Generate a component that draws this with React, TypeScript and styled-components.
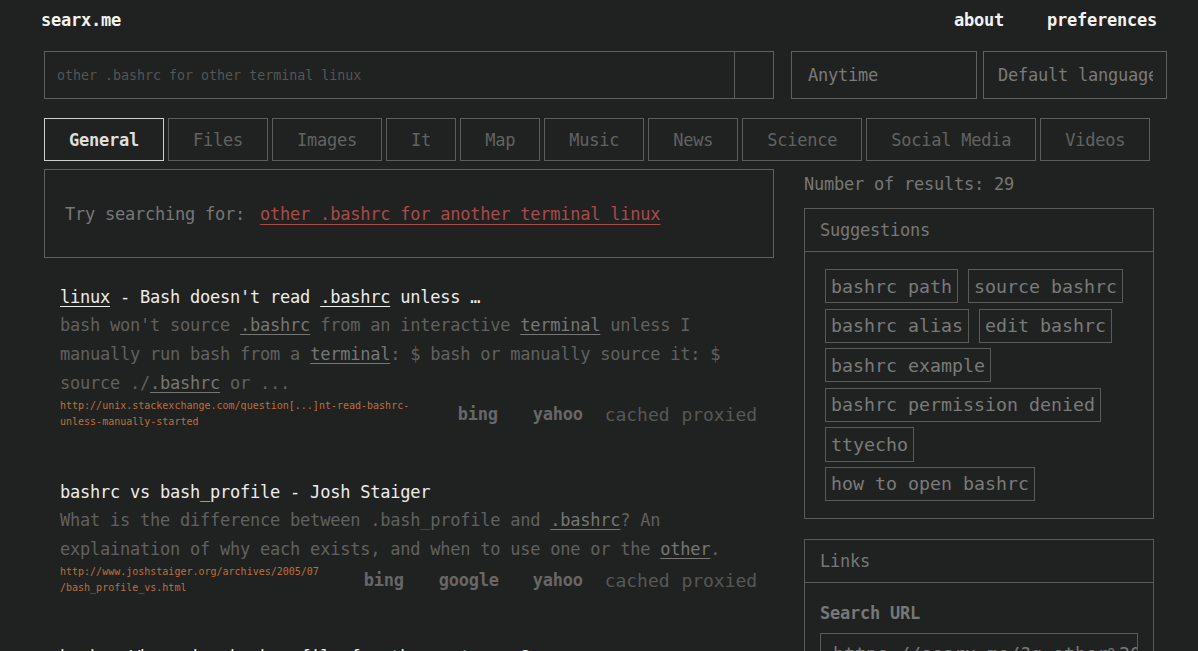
import React from "react";
import styled, { createGlobalStyle } from "styled-components";

const GlobalStyle = createGlobalStyle`
  html, body { margin: 0; padding: 0; }
  body {
    background: #202221;
    font-family: "DejaVu Sans Mono", "Liberation Mono", monospace;
    color: #777;
  }
  * { box-sizing: border-box; }
`;

const mono10 = `
  font-size: 17px;
  letter-spacing: -0.23px;
`;

const Page = styled.div`
  width: 1198px;
  min-height: 651px;
  overflow: hidden;
`;

const Header = styled.header`
  height: 40px;
  display: flex;
  align-items: center;
  justify-content: space-between;
  padding: 0 41px 0 41px;
`;

const Logo = styled.a`
  ${mono10}
  font-weight: bold;
  color: #f2f2f2;
  text-decoration: none;
`;

const Nav = styled.nav`
  display: flex;
  gap: 43px;
`;

const NavLink = styled.a`
  ${mono10}
  font-weight: bold;
  color: #f2f2f2;
  text-decoration: none;
`;

const Main = styled.main`
  padding-left: 44px;
`;

const SearchRow = styled.div`
  margin-top: 11px;
  display: flex;
  align-items: stretch;
  height: 48px;
`;

const SearchBox = styled.div`
  width: 730px;
  border: 1px solid #5f5f5f;
  display: flex;
`;

const SearchInput = styled.div`
  flex: 1;
  display: flex;
  align-items: center;
  padding-left: 12px;
  font-size: 13.3px;
  color: #555;
`;

const SearchButton = styled.div`
  width: 39px;
  border-left: 1px solid #5f5f5f;
`;

const Select = styled.div<{ $w: number; $ml: number; $pl: number }>`
  width: ${(p) => p.$w}px;
  margin-left: ${(p) => p.$ml}px;
  border: 1px solid #5f5f5f;
  display: flex;
  align-items: center;
  padding: 0 10px 0 ${(p) => p.$pl}px;
  overflow: hidden;
  white-space: nowrap;
  ${mono10}
  color: #7a7a7a;
`;

const SelectText = styled.span<{ $clip?: number }>`
  display: block;
  overflow: hidden;
  width: ${(p) => (p.$clip ? `${p.$clip}px` : "100%")};
  flex: none;
`;

const Tabs = styled.div`
  margin-top: 19px;
  display: flex;
  gap: 4px;
`;

const Tab = styled.div<{ $active?: boolean }>`
  height: 43px;
  padding: 0 24px;
  display: flex;
  align-items: center;
  border: 1px solid ${(p) => (p.$active ? "#cfcfcf" : "#5c5c5c")};
  color: ${(p) => (p.$active ? "#dedede" : "#626262")};
  font-weight: ${(p) => (p.$active ? "bold" : "normal")};
  ${mono10}
`;

const Content = styled.div`
  margin-top: 8px;
  display: flex;
  align-items: flex-start;
`;

const LeftCol = styled.div`
  width: 730px;
`;

const RightCol = styled.aside`
  width: 350px;
  margin-left: 30px;
`;

const TryBox = styled.div`
  height: 89px;
  border: 1px solid #5f5f5f;
  display: flex;
  align-items: center;
  padding-left: 20px;
  ${mono10}
  color: #777;
`;

const TryLink = styled.a`
  margin-left: 15px;
  color: #a94a4a;
  text-decoration: underline;
  text-underline-offset: 4px;
`;

const Result = styled.article<{ $mt: number }>`
  padding: 0 17px 0 16px;
  margin-top: ${(p) => p.$mt}px;
`;

const Title = styled.h3`
  margin: 0;
  ${mono10}
  font-weight: normal;
  line-height: 28px;
  color: #ececec;
  white-space: nowrap;
`;

const Hl = styled.span`
  text-decoration: underline;
  text-underline-offset: 3px;
`;

const Desc = styled.p`
  margin: 0;
  ${mono10}
  line-height: 29px;
  color: #606060;
`;

const DescHl = styled.span`
  color: #767676;
  text-decoration: underline;
  text-underline-offset: 3px;
`;

const Meta = styled.div`
  display: flex;
  align-items: center;
`;

const Url = styled.div`
  flex: 1;
  font-size: 10px;
  line-height: 16px;
  color: #bf6e3c;
  white-space: nowrap;
`;

const Engines = styled.div`
  display: flex;
  align-items: center;
`;

const Engine = styled.span<{ $ml: number }>`
  margin-left: ${(p) => p.$ml}px;
  ${mono10}
  font-weight: bold;
  color: #676767;
`;

const CacheLink = styled.a<{ $ml: number }>`
  margin-left: ${(p) => p.$ml}px;
  font-size: 18px;
  letter-spacing: -0.05px;
  color: #575757;
  text-decoration: none;
`;

const Count = styled.div`
  ${mono10}
  line-height: 30px;
  color: #777;
`;

const Panel = styled.section<{ $mt: number }>`
  margin-top: ${(p) => p.$mt}px;
  border: 1px solid #5a5a5a;
`;

const PanelHead = styled.div`
  height: 43px;
  display: flex;
  align-items: center;
  padding-left: 15px;
  border-bottom: 1px solid #5a5a5a;
  ${mono10}
  color: #777;
`;

const ChipBody = styled.div`
  padding: 17px 20px;
  display: flex;
  flex-wrap: wrap;
  gap: 5.4px 10px;
`;

const Chip = styled.a`
  height: 34.2px;
  padding: 0 5px;
  border: 1px solid #5a5a5a;
  display: flex;
  align-items: center;
  font-size: 18.27px;
  color: #7a7a7a;
  text-decoration: none;
  white-space: nowrap;
`;

const LinksBody = styled.div`
  padding: 16px 15px 20px;
`;

const Label = styled.div`
  ${mono10}
  font-weight: bold;
  line-height: 28px;
  color: #777;
`;

const UrlInput = styled.div`
  margin-top: 6px;
  height: 40px;
  border: 1px solid #5a5a5a;
  padding: 0 4px 0 12px;
  display: flex;
  align-items: center;
  overflow: hidden;
  white-space: nowrap;
  font-size: 18.27px;
  color: #7a7a7a;
`;

const suggestions = [
  "bashrc path",
  "source bashrc",
  "bashrc alias",
  "edit bashrc",
  "bashrc example",
  "bashrc permission denied",
  "ttyecho",
  "how to open bashrc",
];

const tabs = [
  "General",
  "Files",
  "Images",
  "It",
  "Map",
  "Music",
  "News",
  "Science",
  "Social Media",
  "Videos",
];

export default function App() {
  return (
    <Page>
      <GlobalStyle />
      <Header>
        <Logo href="#">searx.me</Logo>
        <Nav>
          <NavLink href="#">about</NavLink>
          <NavLink href="#">preferences</NavLink>
        </Nav>
      </Header>
      <Main>
        <SearchRow>
          <SearchBox>
            <SearchInput>other .bashrc for other terminal linux</SearchInput>
            <SearchButton />
          </SearchBox>
          <Select $w={186} $ml={17} $pl={16}>
            <SelectText>Anytime</SelectText>
          </Select>
          <Select $w={184} $ml={6} $pl={14}>
            <SelectText $clip={155}>Default language</SelectText>
          </Select>
        </SearchRow>
        <Tabs>
          {tabs.map((t, i) => (
            <Tab key={t} $active={i === 0}>
              {t}
            </Tab>
          ))}
        </Tabs>
        <Content>
          <LeftCol>
            <TryBox>
              Try searching for:
              <TryLink href="#">other .bashrc for another terminal linux</TryLink>
            </TryBox>

            <Result $mt={25}>
              <Title>
                <Hl>linux</Hl> - Bash doesn't read <Hl>.bashrc</Hl> unless …
              </Title>
              <Desc>
                bash won't source <DescHl>.bashrc</DescHl> from an interactive{" "}
                <DescHl>terminal</DescHl> unless I manually run bash from a{" "}
                <DescHl>terminal</DescHl>: $ bash or manually source it: $
                source ./<DescHl>.bashrc</DescHl> or ...
              </Desc>
              <Meta>
                <Url>
                  http://unix.stackexchange.com/question[...]nt-read-bashrc-
                  <br />
                  unless-manually-started
                </Url>
                <Engines>
                  <Engine $ml={0}>bing</Engine>
                  <Engine $ml={35}>yahoo</Engine>
                  <CacheLink $ml={22} href="#">cached</CacheLink>
                  <CacheLink $ml={12} href="#">proxied</CacheLink>
                </Engines>
              </Meta>
            </Result>

            <Result $mt={48}>
              <Title>bashrc vs bash_profile - Josh Staiger</Title>
              <Desc>
                What is the difference between .bash_profile and{" "}
                <DescHl>.bashrc</DescHl>? An explaination of why each exists, and
                when to use one or the <DescHl>other</DescHl>.
              </Desc>
              <Meta>
                <Url>
                  http://www.joshstaiger.org/archives/2005/07
                  <br />
                  /bash_profile_vs.html
                </Url>
                <Engines>
                  <Engine $ml={0}>bing</Engine>
                  <Engine $ml={35}>google</Engine>
                  <Engine $ml={34}>yahoo</Engine>
                  <CacheLink $ml={22} href="#">cached</CacheLink>
                  <CacheLink $ml={12} href="#">proxied</CacheLink>
                </Engines>
              </Meta>
            </Result>

            <Result $mt={47}>
              <Title>
                bash - Where is <Hl>.bashrc</Hl> file for the root user?
              </Title>
            </Result>
          </LeftCol>

          <RightCol>
            <Count>Number of results: 29</Count>
            <Panel $mt={9}>
              <PanelHead>Suggestions</PanelHead>
              <ChipBody>
                {suggestions.map((s) => (
                  <Chip key={s} href="#">
                    {s}
                  </Chip>
                ))}
              </ChipBody>
            </Panel>
            <Panel $mt={20}>
              <PanelHead>Links</PanelHead>
              <LinksBody>
                <Label>Search URL</Label>
                <UrlInput>
                  https://searx.me/?q=other%20.bashrc%20for%20other%20terminal%20linux
                </UrlInput>
              </LinksBody>
            </Panel>
          </RightCol>
        </Content>
      </Main>
    </Page>
  );
}
